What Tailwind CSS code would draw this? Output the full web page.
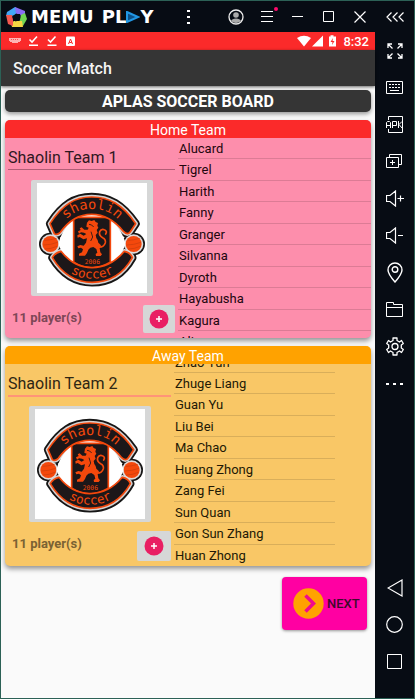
<!DOCTYPE html>
<html lang="en">
<head>
<meta charset="utf-8">
<meta name="viewport" content="width=device-width, initial-scale=1">
<title>Soccer Match</title>
<script src="https://cdn.jsdelivr.net/npm/@tailwindcss/browser@4"></script>
</head>
<body class="flex h-screen flex-col overflow-hidden border border-[#2c6156] bg-[#070c14] font-[Roboto,sans-serif] text-black">

<!-- Shared drawings -->
<svg class="hidden" aria-hidden="true">
  <defs>
    <path id="band-top" d="M147 160C185 102 222 80 272 80C324 80 364 102 404 160L388 184Q380 196 368 184C338 146 308 132 272 132C238 132 206 146 178 186Q168 196 160 190Z"/>
    <path id="band-bottom" d="M180 243C206 276 236 292 273 292C312 292 342 276 370 243Q388 246 394 262C366 312 324 336 273 336C224 336 184 312 154 262Q162 247 180 243Z"/>
    <path id="arc-top" d="M178 172C204 128 234 116 272 116C312 116 342 128 370 172"/>
    <path id="arc-bottom" d="M188 290C212 314 238 325 273 325C310 325 336 314 360 290"/>
    <symbol id="emblem" viewBox="108 38 330 330">
      <rect x="108" y="38" width="330" height="330" fill="#fff"/>
      <g fill="#161616" stroke="#161616" stroke-width="25" stroke-linejoin="round">
        <use href="#band-top"/><use href="#band-bottom"/>
      </g>
      <circle cx="148" cy="221" r="34" fill="#161616"/>
      <circle cx="398" cy="221" r="34" fill="#161616"/>
      <g fill="#d3cfcf" stroke="#d3cfcf" stroke-width="14" stroke-linejoin="round">
        <use href="#band-top"/><use href="#band-bottom"/>
      </g>
      <circle cx="148" cy="221" r="29" fill="#dedada"/>
      <circle cx="398" cy="221" r="29" fill="#dedada"/>
      <path d="M172 221C186 165 225 134 272 134C320 134 360 165 374 221C358 266 320 294 273 294C226 294 188 266 172 221Z" fill="#fff"/>
      <circle cx="148" cy="221" r="24" fill="#f4480c"/>
      <circle cx="398" cy="221" r="24" fill="#f4480c"/>
      <g fill="none" stroke="#c93c0c" stroke-width="2">
        <path d="M130 210Q146 210 166 204M127 224Q148 224 170 216M132 236Q150 236 168 228"/>
        <path d="M380 210Q396 210 416 204M377 224Q398 224 420 216M382 236Q400 236 418 228"/>
      </g>
      <path d="M218 141H328V276Q300 292 273 293Q244 292 218 276Z" fill="#1d1719" stroke="#f4480c" stroke-width="5"/>
      <g fill="#1d1719" stroke="#f4480c" stroke-width="5" stroke-linejoin="round">
        <use href="#band-top"/><use href="#band-bottom"/>
      </g>
      <path d="M258 157L264 150L272 152L280 149L284 155L291 158L289 166L292 172L287 179L290 187L284 194L286 203Q292 210 292 217L300 225L296 233L298 246L303 252L299 257H285L284 251L289 247L286 236L277 230L268 232L262 238L258 248L252 256H234V250L243 246L246 237L240 232L232 234L229 228L238 224L248 226L255 217L258 204L247 207L236 200L230 202L229 195L238 190L248 196L256 191L249 187L240 186L234 190L231 183L239 179L236 174L242 171L250 178L260 178L263 172L256 169L257 163Z" fill="#f4480c"/>
      <path d="M291 230Q308 232 313 217Q315 207 305 202Q293 195 296 184Q301 174 310 178Q320 182 314 191" fill="none" stroke="#f4480c" stroke-width="5" stroke-linecap="round"/>
      <path d="M264 162L272 164L278 170M270 184L275 200L269 212" fill="none" stroke="#1d1719" stroke-width="2.500"/>
      <g fill="#f4480c" font-family="'DejaVu Sans Mono', monospace" text-anchor="middle">
        <text font-size="41"><textPath href="#arc-top" startOffset="50%">shaolin</textPath></text>
        <text font-size="38"><textPath href="#arc-bottom" startOffset="50%">soccer</textPath></text>
        <text x="274" y="281" font-size="19">2006</text>
      </g>
    </symbol>
    <symbol id="add" viewBox="0 0 20 20">
      <circle cx="10" cy="10" r="9.500" fill="#e91e63"/>
      <path d="M10 7V13M7 10H13" stroke="#fff" stroke-width="1.500"/>
    </symbol>
  </defs>
</svg>

<!-- Emulator title bar -->
<header class="flex h-[31px] shrink-0 items-center text-white">
  <div class="flex flex-1 items-center pl-1">
    <svg class="size-[22px]" viewBox="0 0 22 22" aria-hidden="true">
      <path d="M2 6L10 1L13 3L11 8L7 10L1 10Z" fill="#45a7f5"/>
      <path d="M10 1L20 5L20 11L16 12L15 8L11 8Z" fill="#8b6df5"/>
      <path d="M20 7L22 13L18 20L14 17L16 9Z" fill="#72d552"/>
      <path d="M17 15L18 21L7 21L6 17L9 15Z" fill="#f5d743"/>
      <path d="M1 9L7 9L8 14L8 20L3 18Z" fill="#f4584f"/>
      <path d="M11 7.500L15.500 9L15 14L10.500 15.500L7.500 11.500Z" fill="#070c14"/>
    </svg>
    <div class="flex items-center gap-1 pl-1 font-['DejaVu_Sans',sans-serif] text-[18px] font-bold leading-none">
      <span>MEMU</span>
      <span class="flex items-center pl-1"><span>PL</span><svg class="h-3 w-[14px]" viewBox="0 0 14 12" role="img" aria-label="A"><path d="M1 1L12 6L1 11Z" fill="#0d4f86" stroke="#2196e3" stroke-width="2"/></svg><span>Y</span></span>
    </div>
  </div>
  <button class="mr-4 grid h-full w-[31px] place-items-center" aria-label="More"><svg class="h-4 w-1" viewBox="0 0 4 16" fill="#fff"><path d="M0 1h3v2H0zM0 7h3v2H0zM0 13h3v2H0z"/></svg></button>
  <button class="grid h-full w-[31px] place-items-center" aria-label="Account"><svg class="size-4" viewBox="0 0 16 16"><circle cx="8" cy="8" r="7" fill="none" stroke="#eee" stroke-width="1.300"/><circle cx="8" cy="6" r="2.800" fill="#aaa"/><path d="M3 12Q4 9.500 8 9.500T13 12Q11 14 8 14T3 12Z" fill="#aaa"/></svg></button>
  <button class="relative grid h-full w-[31px] place-items-center" aria-label="Menu"><svg class="h-3 w-3" viewBox="0 0 12 12" stroke="#fff"><path d="M0 .5H12M0 5.500H12M0 10.500H12"/></svg><span class="absolute right-1 top-1.5 size-1 rounded-full bg-[#ff0a6c]"></span></button>
  <button class="grid h-full w-[31px] place-items-center" aria-label="Minimize"><svg class="h-3 w-3" viewBox="0 0 12 12" stroke="#fff"><path d="M0 5.500H11"/></svg></button>
  <button class="grid h-full w-[31px] place-items-center" aria-label="Maximize"><svg class="h-3 w-3" viewBox="0 0 12 12" stroke="#fff" fill="none"><path d="M.5.5h10v10H.5z"/></svg></button>
  <button class="grid h-full w-[31px] place-items-center" aria-label="Close"><svg class="h-3 w-3" viewBox="0 0 12 12" stroke="#fff" stroke-width="1.200"><path d="M.5.5L11.500 11.500M11.500.5L.5 11.500"/></svg></button>
  <button class="grid h-full w-[39px] place-items-center" aria-label="Collapse toolbar"><svg class="h-3 w-[18px]" viewBox="0 0 18 12" stroke="#fff" fill="none" stroke-width="1.200"><path d="M5.500 1.500L1 6L5.500 10.500M11.500 1.500L7 6L11.500 10.500M17.500 1.500L13 6L17.500 10.500"/></svg></button>
</header>

<div class="flex min-h-0 flex-1">
  <main class="flex min-w-0 flex-1 flex-col bg-[#fafafa]">
    <!-- Android status bar -->
    <div class="flex h-[18px] shrink-0 items-center justify-between bg-[#fb2a2a] pl-2 pr-1.5 text-white">
      <svg class="h-3 w-[68px]" viewBox="0 0 68 12" fill="#fff" aria-hidden="true">
        <path d="M0 3h12v3h-1v1H9v1H3V7H1V6H0z" opacity=".65"/>
        <path d="M2 4.500h8" stroke="#fb2a2a" stroke-width=".7" stroke-dasharray="1 1"/>
        <path d="M20.500 4.500L23 7L28 1.500M39 4.500L41.500 7L46.500 1.500" fill="none" stroke="#fff" stroke-width="1.600"/>
        <path d="M20 9.500h9v1.500h-9zM38.500 9.500h9v1.500h-9z"/>
        <rect x="57" y="1.500" width="9" height="9.500" rx="1"/>
        <path d="M59.500 9L61.500 4L63.500 9M60.300 7.500H62.800" fill="none" stroke="#fb2a2a"/>
      </svg>
      <div class="flex items-center gap-1.5">
        <svg class="h-3 w-10" viewBox="0 0 40 12" fill="#fff" aria-hidden="true">
          <path d="M0 3Q7-1.500 14 3L7 11.500Z"/><path d="M26 .5V11.500H15Z"/>
          <path d="M32 1.500h1.500V.3h3v1.200H39v10h-7z"/><path d="M36 3L33.500 7H35.500L35 10L37.500 6H35.500Z" fill="#fb2a2a"/>
        </svg>
        <span class="text-[13px] font-medium leading-none">8:32</span>
      </div>
    </div>
    <div class="flex h-[36px] shrink-0 items-center bg-[#353535] pl-3 pt-0.5 shadow-[0_1px_3px_rgba(0,0,0,0.6)]">
      <h1 class="text-base font-medium leading-none text-[#f4f4f4]">Soccer Match</h1>
    </div>

    <div class="flex flex-col gap-2 pl-1 pr-1 pt-1">
      <h2 class="grid h-[22px] place-items-center rounded-[5px] bg-[#353535] pt-0.5 text-base font-bold leading-none text-white shadow-[0_2px_4px_rgba(0,0,0,0.4)]">APLAS SOCCER BOARD</h2>

      <section class="overflow-hidden rounded-[5px] bg-[#fd8eac] shadow-[0_3px_5px_rgba(0,0,0,0.4)]">
        <h3 class="grid h-[18px] place-items-center bg-[#fb2a2a] pt-0.5 text-sm leading-none text-white">Home Team</h3>
        <div class="grid h-[200px] grid-cols-[173fr_193fr]">
          <div class="flex flex-col pb-[5px] pl-[3px] pr-[3px]">
            <input aria-label="Home team name" value="Shaolin Team 1" class="h-8 w-full border-b border-[#b25d76] bg-transparent pt-2 text-base text-[#30171f] outline-none">
            <button aria-label="Home team logo" class="mx-auto mt-[10px] rounded-[2px] bg-[#d6d7d7] px-[6px] py-[3px]"><svg class="size-[110px]"><use href="#emblem"/></svg></button>
            <div class="mt-auto flex justify-between">
              <p class="pl-1 pt-[5px] text-[13px] font-bold leading-4 text-[#7d4656]">11 player(s)</p>
              <button aria-label="Add home player" class="grid h-[28px] w-8 place-items-center rounded-[2px] bg-[#d6d7d7]"><svg class="size-5"><use href="#add"/></svg></button>
            </div>
          </div>
          <div class="min-h-0 overflow-hidden text-[13px] leading-[22px] text-[#22060e]">
            <ul class="grid h-[193px] grid-rows-9 *:h-full *:min-h-0 *:border-b *:border-[#dc7b95] *:pl-px">
              <li>Alucard</li><li>Tigrel</li><li>Harith</li><li>Fanny</li><li>Granger</li><li>Silvanna</li><li>Dyroth</li><li>Hayabusha</li><li>Kagura</li>
            </ul>
            <p class="pl-px">Alice</p>
          </div>
        </div>
      </section>

      <section class="overflow-hidden rounded-[5px] bg-[#f9c766] shadow-[0_3px_5px_rgba(0,0,0,0.4)]">
        <h3 class="grid h-[18px] place-items-center bg-[#ffa200] pt-0.5 text-sm leading-none text-white">Away Team</h3>
        <div class="grid h-[202px] grid-cols-[169fr_161fr_36fr]">
          <div class="flex flex-col pb-[5px] pl-[3px] pr-[3px]">
            <input aria-label="Away team name" value="Shaolin Team 2" class="h-[33px] w-full border-b-2 border-[#ff9478] bg-transparent pt-2 text-base text-[#2f2614] outline-none">
            <button aria-label="Away team logo" class="mx-auto mt-[9px] rounded-[2px] bg-[#d6d7d7] px-[6px] py-[3px]"><svg class="size-[110px]"><use href="#emblem"/></svg></button>
            <div class="mt-auto flex justify-between">
              <p class="pl-1 pt-[5px] text-[13px] font-bold leading-4 text-[#7b6233]">11 player(s)</p>
              <button aria-label="Add away player" class="grid h-[30px] w-[34px] place-items-center rounded-[2px] bg-[#d6d7d7]"><svg class="size-5"><use href="#add"/></svg></button>
            </div>
          </div>
          <div class="flex min-h-0 flex-col justify-end overflow-hidden text-[13px] leading-[22px] text-[#221905]">
            <p class="h-[21px] shrink-0 border-b border-[#d9ae5a] pl-px">Zhao Yun</p>
            <ul class="grid h-[193px] shrink-0 grid-rows-9 *:h-full *:min-h-0 *:border-b *:border-[#d9ae5a] *:pl-px *:last:border-transparent">
              <li>Zhuge Liang</li><li>Guan Yu</li><li>Liu Bei</li><li>Ma Chao</li><li>Huang Zhong</li><li>Zang Fei</li><li>Sun Quan</li><li>Gon Sun Zhang</li><li>Huan Zhong</li>
            </ul>
          </div>
        </div>
      </section>
    </div>

    <button class="mr-2 mt-[11px] flex h-[53px] w-[85px] items-center gap-[3px] self-end rounded-[4px] bg-[#ff00a2] pl-[11px] text-[13px] font-medium text-[#3d0a2b] shadow-[0_1px_3px_rgba(0,0,0,0.4)]">
      <svg class="size-[31px] shrink-0" viewBox="0 0 31 31" aria-hidden="true"><circle cx="15.500" cy="15.500" r="15.200" fill="#ffa200"/><path d="M12.500 7.500L20.500 15.500L12.500 23.500" fill="none" stroke="#f0098e" stroke-width="3.500"/></svg>
      NEXT
    </button>
  </main>

  <!-- Emulator toolbar -->
  <nav class="flex w-[39px] shrink-0 flex-col pb-[18px] *:grid *:h-[37px] *:place-items-center" aria-label="Emulator tools">
    <button aria-label="Full screen"><svg class="size-4" viewBox="0 0 16 16" fill="none" stroke="#fff" stroke-width="1.300"><path d="M1 5V1H5M1 1L5.500 5.500M11 1H15V5M15 1L10.500 5.500M1 11V15H5M1 15L5.500 10.500M15 11V15H11M15 15L10.500 10.500"/></svg></button>
    <button aria-label="Keyboard"><svg class="h-[14px] w-[18px]" viewBox="0 0 18 14" fill="none" stroke="#fff"><path d="M.5.500h16v12H.5z"/><path d="M3 3.500H15M3 6.500H15" stroke-dasharray="2 1"/><path d="M4 9.500H13"/></svg></button>
    <button aria-label="Install APK"><svg class="h-[18px] w-[18px]" viewBox="0 0 18 18" fill="none" stroke="#fff"><path d="M2.500 4V.5H16.500V16.500H2.500V13"/><path d="M.5 12V6.500L1.500 5.500H3.500L4.500 6.500V12M.5 9.500H4.500M6.500 12V5.500H10.500V9.500H6.500M12.500 5V12M16 5.500L13 8.500L16 12"/></svg></button>
    <button aria-label="Multiple instances"><svg class="h-[15px] w-[17px]" viewBox="0 0 17 15" fill="none" stroke="#fff"><path d="M3.500 3V.5H15.500V10.500H13"/><path d="M.5 3.500h12v10H.5zM6.500 6v5M4 8.500h5"/></svg></button>
    <button aria-label="Volume up"><svg class="h-[17px] w-[18px]" viewBox="0 0 18 17" fill="none" stroke="#fff" stroke-width="1.200"><path d="M.5 5.500H4L9.500 1V16L4 11.500H.5ZM11.500 8.500H18M14.500 5.500V11.500"/></svg></button>
    <button aria-label="Volume down"><svg class="h-[17px] w-[18px]" viewBox="0 0 18 17" fill="none" stroke="#fff" stroke-width="1.200"><path d="M.5 5.500H4L9.500 1V16L4 11.500H.5ZM12 8.500H17"/></svg></button>
    <button aria-label="Location"><svg class="h-[21px] w-4" viewBox="0 0 16 21" fill="none" stroke="#fff" stroke-width="1.400"><path d="M8 20Q1 12 1 8A7 7 0 0 1 15 8Q15 12 8 20Z"/><circle cx="8" cy="7.500" r="2.800"/></svg></button>
    <button aria-label="Shared folder"><svg class="h-[15px] w-[18px]" viewBox="0 0 18 15" fill="none" stroke="#fff"><path d="M.5 14.500V.5H7.500V2.500H16.500V14.500ZM.5 5.500H16.500"/></svg></button>
    <button aria-label="Settings"><svg class="h-[19px] w-[18px]" viewBox="0 0 18 19" fill="none" stroke="#fff" stroke-width="1.300" stroke-linejoin="round"><path d="M7 1H11V3.500L13.500 5L15.500 3.500L17.300 6.500L15.300 8V11L17.300 12.500L15.500 15.500L13.500 14L11 15.500V18H7V15.500L4.500 14L2.500 15.500L.7 12.500L2.700 11V8L.7 6.500L2.500 3.500L4.500 5L7 3.500Z"/><circle cx="9" cy="9.500" r="3"/></svg></button>
    <button aria-label="More tools"><svg class="h-[2px] w-[17px]" viewBox="0 0 17 2" fill="#fff"><path d="M0 0h3v2H0zM7 0h3v2H7zM14 0h3v2h-3z"/></svg></button>
    <button aria-label="Back" class="mt-auto"><svg class="h-[18px] w-4" viewBox="0 0 16 18" fill="none" stroke="#fff" stroke-width="1.200"><path d="M15 1V17L1 9Z"/></svg></button>
    <button aria-label="Home"><svg class="size-[17px]" viewBox="0 0 17 17" fill="none" stroke="#fff" stroke-width="1.200"><circle cx="8.500" cy="8.500" r="7.800"/></svg></button>
    <button aria-label="Recent apps"><svg class="size-[15px]" viewBox="0 0 15 15" fill="none" stroke="#fff"><path d="M.5.500h14v14H.5z"/></svg></button>
  </nav>
</div>
</body>
</html>
